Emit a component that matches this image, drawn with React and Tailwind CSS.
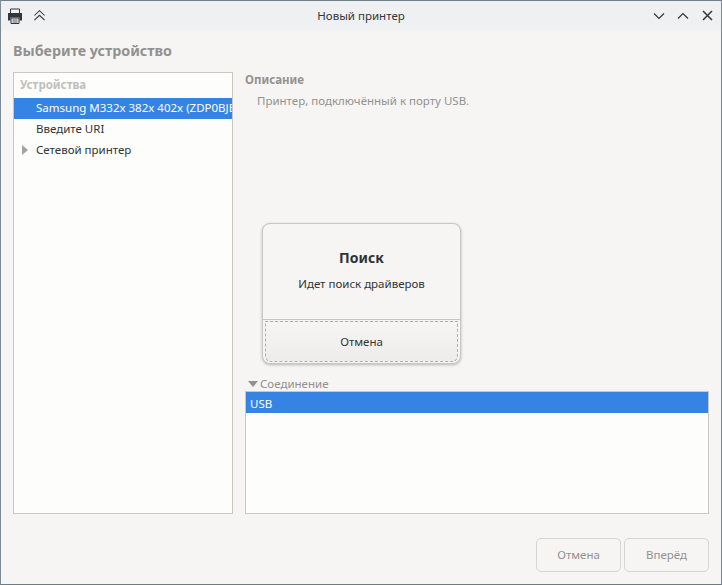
import React from 'react';

const font = { fontFamily: '"Noto Sans", sans-serif' };

export default function App() {
  return (
    <div style={font} className="relative w-[722px] h-[585px] flex flex-col overflow-hidden bg-[#f6f5f4] border-x border-b border-x-[#7d8a96] border-b-[#6f7a85] text-[11.5px] text-[#2e3436]">
      {/* Title bar */}
      <div className="h-[30px] shrink-0 flex items-center bg-[#eff0f2] border-t border-t-[#6f7f8e] text-[#31363b]">
        <div className="flex-1 flex items-center">
          <svg className="ml-[6px] w-[16px] h-[16px]" viewBox="0 0 16 16" fill="none">
            <path d="M3.5 1h9v4.5h-9z" stroke="#31363b" strokeWidth="1" />
            <path d="M1 5h14v7.5h-2.5V9.5h-9v3H1z" fill="#31363b" />
            <path d="M4 10h8v5.5H4z" stroke="#31363b" strokeWidth="1" />
            <path d="M5.5 12h5M5.5 14h5" stroke="#31363b" strokeWidth="0.8" />
          </svg>
          <svg className="ml-[10px] w-[13px] h-[13px]" viewBox="0 0 14 14" fill="none" stroke="#31363b" strokeWidth="1.1">
            <path d="M1.5 7L7 1.8 12.5 7" />
            <path d="M1.5 12L7 6.8 12.5 12" />
          </svg>
        </div>
        <div className="shrink-0 text-center">Новый принтер</div>
        <div className="flex-1 flex items-center justify-end">
          <svg className="w-[12px] h-[8px]" viewBox="0 0 12 8" fill="none" stroke="#31363b" strokeWidth="1.2">
            <path d="M1 1.5l5 5 5-5" />
          </svg>
          <svg className="ml-[12px] w-[12px] h-[8px]" viewBox="0 0 12 8" fill="none" stroke="#31363b" strokeWidth="1.2">
            <path d="M1 6.5l5-5 5 5" />
          </svg>
          <svg className="ml-[13px] mr-[8px] w-[11px] h-[11px]" viewBox="0 0 11 11" fill="none" stroke="#31363b" strokeWidth="1.5">
            <path d="M1 1l9 9M10 1l-9 9" />
          </svg>
        </div>
      </div>

      {/* Body */}
      <div className="flex-1 min-h-0 flex flex-col px-[12px]">
        <div className="h-[41px] mb-[1px] shrink-0 flex items-center text-[14.3px] font-bold text-[#92918f]">Выберите устройство</div>

        <div className="h-[442px] shrink-0 flex gap-[12px]">
          {/* Devices tree */}
          <div className="w-[220px] shrink-0 bg-[#fdfdfc] border border-[#cdc7c2] overflow-hidden">
            <div className="h-[25px] pb-[2px] pl-[6px] flex items-center font-bold text-[#c0bfbd]">Устройства</div>
            <div className="h-[21px] pb-[1px] pl-[22px] flex items-center whitespace-nowrap bg-[#3584e4] text-white">Samsung M332x 382x 402x (ZDP0BJBD300034)</div>
            <div className="h-[21px] pb-[1px] pl-[22px] flex items-center">Введите URI</div>
            <div className="h-[21px] pb-[1px] flex items-center">
              <svg className="ml-[8px] w-[6px] h-[10px]" viewBox="0 0 6 10"><path d="M0 0l6 5-6 5z" fill="#a3a3a1" /></svg>
              <span className="ml-[8px]">Сетевой принтер</span>
            </div>
          </div>

          {/* Description + connection */}
          <div className="flex-1 min-w-0 flex flex-col">
            <div className="h-[16px] flex items-center font-bold text-[#92918f]">Описание</div>
            <div className="mt-[5px] h-[16px] pl-[12px] flex items-center text-[#92918f]">Принтер, подключённый к порту USB.</div>
            <div className="flex-1" />
            <div className="h-[14px] flex items-center text-[#92918f]">
              <svg className="ml-[3px] w-[10px] h-[6px]" viewBox="0 0 10 6"><path d="M0 0h10L5 6z" fill="#92918f" /></svg>
              <span className="ml-[2px]">Соединение</span>
            </div>
            <div className="h-[123px] shrink-0 bg-[#fdfdfc] border border-[#cdc7c2]">
              <div className="h-[21px] pl-[4px] pt-[2px] flex items-center bg-[#3584e4] text-white">USB</div>
            </div>
          </div>
        </div>

        {/* Footer buttons */}
        <div className="flex-1 flex items-start justify-end gap-[3px] pt-[24px]">
          <div className="w-[85px] h-[34px] flex items-center justify-center rounded-[5px] border border-[#d8d4d0] text-[#92918f]">Отмена</div>
          <div className="w-[85px] h-[34px] flex items-center justify-center rounded-[5px] border border-[#d8d4d0] text-[#92918f]">Вперёд</div>
        </div>
      </div>

      {/* Search dialog, sits over the right column */}
      <div className="absolute left-[261px] top-[223px] w-[199px] h-[141px] flex flex-col rounded-[8px] border border-[#c9c5c1] bg-[#f6f5f4] shadow-[0_1px_3px_rgba(0,0,0,0.25)] overflow-hidden">
        <div className="h-[96px] shrink-0 flex flex-col items-center border-b border-[#c9c5c1]">
          <div className="mt-[24px] h-[18px] flex items-center text-[14px] font-bold">Поиск</div>
          <div className="mt-[10px] h-[16px] flex items-center">Идет поиск драйверов</div>
        </div>
        <div className="flex-1 p-[1px]">
          <div className="h-full mx-[1px] flex items-center justify-center rounded-b-[6px] border border-dashed border-[#b0aeac] bg-gradient-to-b from-[#f6f5f4] to-[#edecea]">Отмена</div>
        </div>
      </div>
    </div>
  );
}
